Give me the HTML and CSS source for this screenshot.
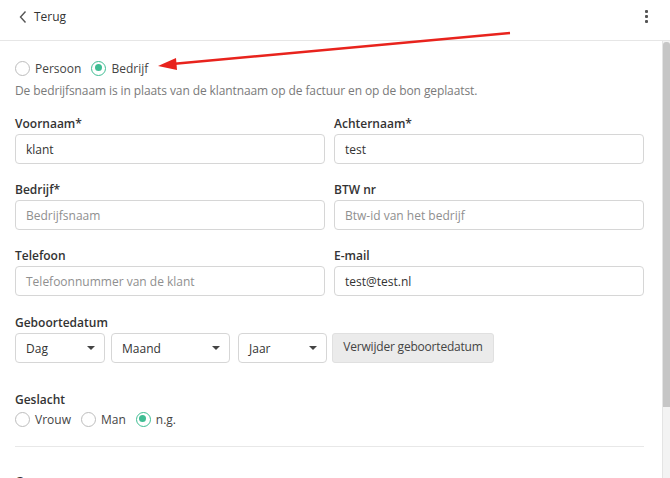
FILE: index.html
```html
<!DOCTYPE html>
<html lang="nl">
<head>
<meta charset="utf-8">
<link rel="stylesheet" href="styles.css">
</head>
<body>
<header class="topbar">
  <a class="back">
    <svg class="chev" width="10" height="14" viewBox="0 0 10 14"><path d="M7.5 1.5 L2.5 7 L7.5 12.5" fill="none" stroke="#555" stroke-width="1.4"/></svg>
    <span>Terug</span>
  </a>
  <span class="kebab"><i></i><i></i><i></i></span>
</header>
<div class="body">
  <main class="main">
    <div class="radios top-radios">
      <label class="radio"><span class="dot"></span>Persoon</label>
      <label class="radio"><span class="dot on"></span>Bedrijf</label>
    </div>
    <p class="hint">De bedrijfsnaam is in plaats van de klantnaam op de factuur en op de bon geplaatst.</p>
    <div class="grid">
      <div class="field"><div class="lbl">Voornaam*</div><div class="input">klant</div></div>
      <div class="field"><div class="lbl">Achternaam*</div><div class="input">test</div></div>
      <div class="field"><div class="lbl">Bedrijf*</div><div class="input ph">Bedrijfsnaam</div></div>
      <div class="field"><div class="lbl">BTW nr</div><div class="input ph">Btw-id van het bedrijf</div></div>
      <div class="field"><div class="lbl">Telefoon</div><div class="input ph">Telefoonnummer van de klant</div></div>
      <div class="field"><div class="lbl">E-mail</div><div class="input">test@test.nl</div></div>
    </div>
    <div class="section birth">
      <div class="lbl">Geboortedatum</div>
      <div class="selects">
        <div class="select s-dag">Dag<span class="caret"></span></div>
        <div class="select s-maand">Maand<span class="caret"></span></div>
        <div class="select s-jaar">Jaar<span class="caret"></span></div>
        <div class="btn">Verwijder geboortedatum</div>
      </div>
    </div>
    <div class="section gender">
      <div class="lbl lbl-g">Geslacht</div>
      <div class="radios">
        <label class="radio"><span class="dot"></span>Vrouw</label>
        <label class="radio"><span class="dot"></span>Man</label>
        <label class="radio"><span class="dot on"></span>n.g.</label>
      </div>
    </div>
    <hr class="sep">
    <div class="lbl lbl-next">Groepen</div>
  </main>
  <div class="scrollbar"><div class="thumb"></div></div>
</div>
<svg class="arrow" width="670" height="100" viewBox="0 0 670 100">
  <line x1="510" y1="33" x2="172" y2="64" stroke="#e8231d" stroke-width="2.4"/>
  <polygon points="158,66 176,58 177,70" fill="#e8231d"/>
</svg>
</body>
</html>
```
FILE: styles.css
```css
* { box-sizing: border-box; }
html, body { margin: 0; padding: 0; }
body {
  width: 670px;
  height: 478px;
  overflow: hidden;
  font-family: "Open Sans", "Noto Sans", sans-serif;
  font-size: 12px;
  color: #333;
  background: #fff;
  position: relative;
}
.topbar {
  height: 41px;
  border-bottom: 1px solid #e6e6e6;
  display: flex;
  align-items: center;
  justify-content: space-between;
  padding: 0 22px 0 18px;
}
.back {
  display: flex;
  align-items: center;
  gap: 6px;
  font-size: 12px;
  color: #333;
  margin-top: -7px;
}
.chev { display: block; }
.kebab {
  display: flex;
  flex-direction: column;
  gap: 2px;
  margin-top: -7px;
}
.kebab i {
  display: block;
  width: 3px;
  height: 3px;
  background: #555;
  border-radius: 1px;
}
.body {
  display: flex;
  height: 437px;
}
.main {
  flex: 1;
  padding: 17px 18px 0 15px;
  overflow: hidden;
}
.scrollbar {
  width: 8px;
  background: #f3f3f3;
  border-left: 1px solid #e4e4e4;
  display: flex;
  flex-direction: column;
  padding-top: 1px;
}
.thumb {
  height: 365px;
  background: #c6c6c6;
  border-radius: 3px 3px 0 0;
}
.radios {
  display: flex;
  align-items: center;
  height: 20px;
  gap: 10px;
}
.top-radios { gap: 10px; }
.radio {
  display: flex;
  align-items: center;
  gap: 5px;
  color: #444;
  font-size: 12px;
}
.dot {
  width: 15px;
  height: 15px;
  border-radius: 50%;
  border: 1px solid #bdbdbd;
  background: #fff;
  display: inline-block;
  position: relative;
}
.dot.on {
  border: 1.5px solid #3fbd93;
}
.dot.on::after {
  content: "";
  position: absolute;
  left: 2.5px;
  top: 2.5px;
  width: 7px;
  height: 7px;
  border-radius: 50%;
  background: #3fbd93;
}
.hint {
  margin: 4px 0 0;
  font-size: 12px;
  letter-spacing: -0.1px;
  line-height: 17px;
  color: #7a7a7a;
}
.grid {
  display: grid;
  grid-template-columns: 310px 310px;
  column-gap: 9px;
  row-gap: 15px;
  margin-top: 14px;
}
.lbl {
  font-size: 12px;
  font-weight: 600;
  line-height: 18px;
  color: #333;
  padding-top: 2px;
  margin-bottom: 1px;
}
.input {
  height: 30px;
  border: 1px solid #d6d6d6;
  border-radius: 4px;
  padding: 0 10px;
  display: flex;
  align-items: center;
  font-size: 12px;
  color: #333;
}
.input.ph { color: #8f8f8f; }
.birth { margin-top: 16px; }
.selects {
  display: flex;
  align-items: stretch;
  height: 30px;
}
.select {
  border: 1px solid #d6d6d6;
  border-radius: 4px;
  display: flex;
  align-items: center;
  justify-content: space-between;
  padding: 0 9px 0 10px;
  font-size: 12px;
  color: #333;
}
.s-dag { width: 90px; margin-right: 6px; }
.s-maand { width: 119px; margin-right: 8px; }
.s-jaar { width: 89px; margin-right: 5px; }
.caret {
  width: 0;
  height: 0;
  border-left: 4px solid transparent;
  border-right: 4px solid transparent;
  border-top: 4px solid #444;
}
.btn {
  width: 162px;
  background: #ebebeb;
  border: 1px solid #e0e0e0;
  border-radius: 3px;
  display: flex;
  align-items: center;
  justify-content: center;
  font-size: 12px;
  letter-spacing: -0.2px;
  color: #444;
  padding-bottom: 3px;
}
.gender { margin-top: 26px; }
.lbl-g { margin-bottom: 0; }
.sep {
  border: 0;
  border-top: 1px solid #e8e8e8;
  margin: 17px 0 0;
}
.lbl-next { margin-top: 24px; }
.arrow {
  position: absolute;
  left: 0;
  top: 0;
  pointer-events: none;
}
```
